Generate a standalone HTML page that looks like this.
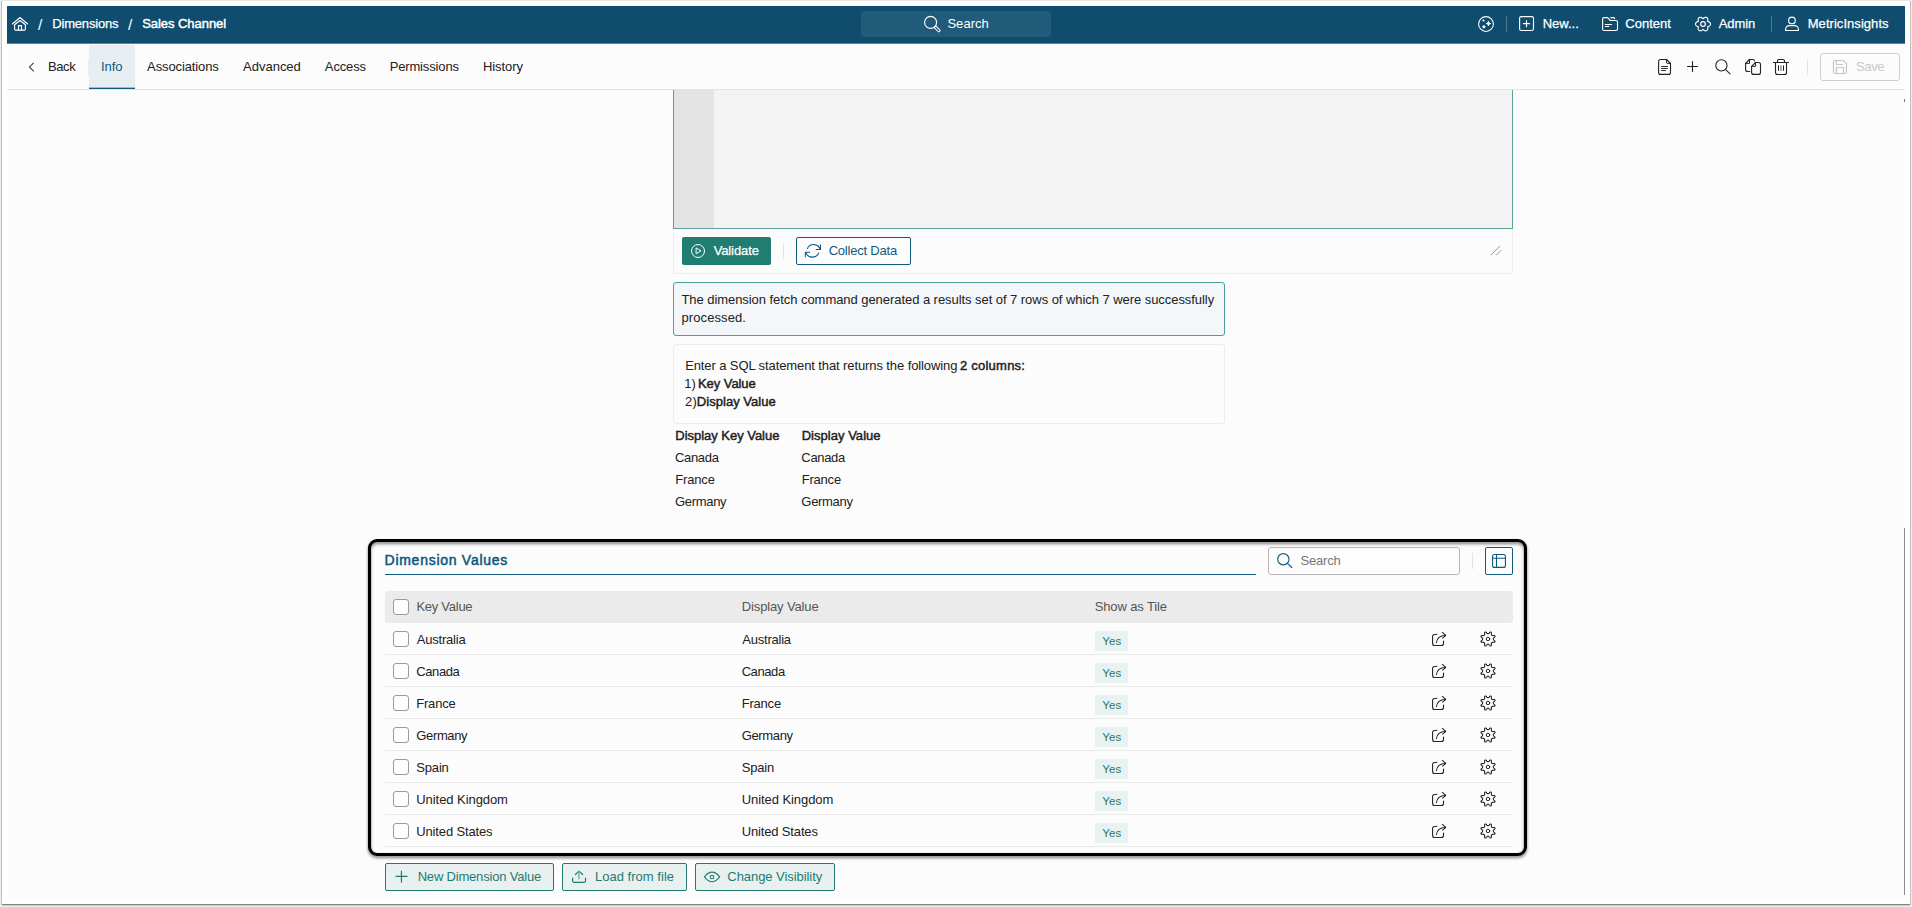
<!DOCTYPE html>
<html lang="en">
<head>
<meta charset="utf-8">
<title>Sales Channel - Dimensions</title>
<style>
html,body{margin:0;padding:0;}
body{width:1912px;height:907px;overflow:hidden;background:#fff;font-family:"Liberation Sans",Arial,sans-serif;}
#app{position:relative;width:1912px;height:907px;overflow:hidden;}
#app *{box-sizing:border-box;}
.a{position:absolute;}
.t{position:absolute;white-space:pre;}
svg{position:absolute;overflow:visible;}
.ico{fill:none;stroke-linecap:round;stroke-linejoin:round;}

</style>
</head>
<body>
<div id="app">
<div class="chrome">
<!-- window frame -->
<div class="a" style="left:0;top:0;width:1912px;height:907px;background:#f1f1f1;"></div>
<div class="a" style="left:1px;top:0;width:1910px;height:905px;background:#fff;border:1px solid #c0c0c0;border-top-color:#e9e9e9;border-bottom-color:#858585;border-radius:2px;box-shadow:0 1px 1px rgba(0,0,0,.18);"></div>
<!-- page -->
<div class="a" style="left:7px;top:6px;width:1898px;height:893px;background:#fcfcfc;"></div>
<!-- top nav -->
<div class="a" style="left:7px;top:6px;width:1898px;height:37px;background:#0f4c6e;"></div>
<div class="a" style="left:7px;top:43px;width:1898px;height:1px;background:#57829a;"></div>
<div class="a" style="left:861px;top:11px;width:190px;height:26px;background:#225a79;border-radius:3px;"></div>
<div class="a" style="left:1506px;top:16px;width:1px;height:16px;background:#4b7891;"></div>
<div class="a" style="left:1771px;top:16px;width:1px;height:16px;background:#4b7891;"></div>
<!-- tab bar -->
<div class="a" style="left:89px;top:45px;width:46px;height:43px;background:#e7eef2;"></div>
<div class="a" style="left:89px;top:87px;width:46px;height:1px;background:#9bbccb;"></div>
<div class="a" style="left:89px;top:88px;width:46px;height:1px;background:#105a80;"></div>
<div class="a" style="left:88px;top:59px;width:1px;height:16px;background:#ececec;"></div>
<div class="a" style="left:7px;top:89px;width:1898px;height:1px;background:#e4e4e4;"></div>
<div class="a" style="left:1807px;top:59px;width:1px;height:16px;background:#e2e2e2;"></div>
<div class="a" style="left:1820px;top:53px;width:80px;height:28px;border:1px solid #cfcfcf;border-radius:3px;background:#fcfcfc;"></div>
<!-- scrollbar -->
<div class="a" style="left:1904px;top:99px;width:1px;height:3px;background:#777;"></div>
<div class="a" style="left:1904px;top:528px;width:1px;height:367px;background:#8a8a8a;"></div>
<!-- editor -->
<div class="a" style="left:673px;top:90px;width:840px;height:139px;background:#f3f3f3;border:1px solid #5aa29a;border-top:none;"></div>
<div class="a" style="left:674px;top:90px;width:40px;height:138px;background:#e3e3e3;"></div>
<div class="a" style="left:673px;top:229px;width:840px;height:45px;border:1px solid #ececec;border-top:none;border-radius:0 0 4px 4px;"></div>
<div class="a" style="left:682px;top:237px;width:89px;height:28px;background:#1f7d72;border-radius:2px;"></div>
<div class="a" style="left:783px;top:243px;width:1px;height:16px;background:#e2e2e2;"></div>
<div class="a" style="left:796px;top:237px;width:115px;height:28px;border:1px solid #105a80;border-radius:2px;background:#fdfdfd;"></div>
<!-- message -->
<div class="a" style="left:673px;top:282px;width:552px;height:54px;background:#f3f7f9;border:1px solid #4ba096;border-radius:3px;"></div>
<div class="a" style="left:673px;top:344px;width:552px;height:80px;border:1px solid #ececec;border-radius:3px;"></div>
<!-- highlight frame -->
<div class="a" style="left:368px;top:539px;width:1159px;height:317px;border:3px solid #000;border-radius:9px;filter:drop-shadow(.5px 2px 1.5px rgba(0,0,0,.5));"></div>
<!-- section header -->
<div class="a" style="left:385px;top:574px;width:871px;height:1px;background:#105a80;"></div>
<div class="a" style="left:1268px;top:547px;width:192px;height:28px;border:1px solid #b5b5b5;border-radius:3px;background:#fdfdfd;"></div>
<div class="a" style="left:1472px;top:553px;width:1px;height:16px;background:#e2e2e2;"></div>
<div class="a" style="left:1485px;top:547px;width:28px;height:28px;border:1px solid #105a80;border-radius:2px;background:#fdfdfd;"></div>
<!-- table -->
<div class="a" style="left:385px;top:591px;width:1128px;height:32px;background:#ebebeb;border-radius:3px;"></div>
<div class="a" style="left:385px;top:654px;width:1128px;height:1px;background:#e9e9e9;"></div>
<div class="a" style="left:1095px;top:631px;width:33px;height:20px;background:#e8f2f1;"></div>
<div class="a" style="left:385px;top:686px;width:1128px;height:1px;background:#e9e9e9;"></div>
<div class="a" style="left:1095px;top:663px;width:33px;height:20px;background:#e8f2f1;"></div>
<div class="a" style="left:385px;top:718px;width:1128px;height:1px;background:#e9e9e9;"></div>
<div class="a" style="left:1095px;top:695px;width:33px;height:20px;background:#e8f2f1;"></div>
<div class="a" style="left:385px;top:750px;width:1128px;height:1px;background:#e9e9e9;"></div>
<div class="a" style="left:1095px;top:727px;width:33px;height:20px;background:#e8f2f1;"></div>
<div class="a" style="left:385px;top:782px;width:1128px;height:1px;background:#e9e9e9;"></div>
<div class="a" style="left:1095px;top:759px;width:33px;height:20px;background:#e8f2f1;"></div>
<div class="a" style="left:385px;top:814px;width:1128px;height:1px;background:#e9e9e9;"></div>
<div class="a" style="left:1095px;top:791px;width:33px;height:20px;background:#e8f2f1;"></div>
<div class="a" style="left:385px;top:846px;width:1128px;height:1px;background:#e9e9e9;"></div>
<div class="a" style="left:1095px;top:823px;width:33px;height:20px;background:#e8f2f1;"></div>
<div class="a" style="left:393px;top:599px;width:16px;height:16px;border:1px solid #9a9a9a;border-radius:3px;background:#fdfdfd;"></div>
<div class="a" style="left:393px;top:631px;width:16px;height:16px;border:1px solid #9a9a9a;border-radius:3px;background:#fdfdfd;"></div>
<div class="a" style="left:393px;top:663px;width:16px;height:16px;border:1px solid #9a9a9a;border-radius:3px;background:#fdfdfd;"></div>
<div class="a" style="left:393px;top:695px;width:16px;height:16px;border:1px solid #9a9a9a;border-radius:3px;background:#fdfdfd;"></div>
<div class="a" style="left:393px;top:727px;width:16px;height:16px;border:1px solid #9a9a9a;border-radius:3px;background:#fdfdfd;"></div>
<div class="a" style="left:393px;top:759px;width:16px;height:16px;border:1px solid #9a9a9a;border-radius:3px;background:#fdfdfd;"></div>
<div class="a" style="left:393px;top:791px;width:16px;height:16px;border:1px solid #9a9a9a;border-radius:3px;background:#fdfdfd;"></div>
<div class="a" style="left:393px;top:823px;width:16px;height:16px;border:1px solid #9a9a9a;border-radius:3px;background:#fdfdfd;"></div>
<div class="a" style="left:385px;top:863px;width:169px;height:28px;background:#e9f1f0;border:1px solid #23796f;border-radius:2px;"></div>
<div class="a" style="left:562px;top:863px;width:125px;height:28px;background:#e9f1f0;border:1px solid #23796f;border-radius:2px;"></div>
<div class="a" style="left:695px;top:863px;width:140px;height:28px;background:#e9f1f0;border:1px solid #23796f;border-radius:2px;"></div>
</div>
<div class="icons">
<svg width="1912" height="907" viewBox="0 0 1912 907" style="left:0;top:0" class="ico">
<g stroke="#fff" stroke-width="1.15">
<path d="M12.4 24 L20 17.5 L27.6 24"/>
<path d="M14.6 24.8 L20 20.5 L25.4 24.8 V28.9 a1.3 1.3 0 0 1 -1.3 1.3 H15.9 a1.3 1.3 0 0 1 -1.3 -1.3 Z"/>
<path d="M18.5 30.2 V25.6 H21.5 V30.2"/>
<g transform="translate(930.6 22.4) rotate(45)"><circle r="6"/><rect x="6" y="-1.15" width="6.6" height="2.3" rx=".5" stroke-width="1"/></g>
<circle cx="1486" cy="24" r="7.4" stroke-width="1.05"/>
<path d="M1488.50 20.70 L1489.62 22.38 L1491.30 23.50 L1489.62 24.62 L1488.50 26.30 L1487.38 24.62 L1485.70 23.50 L1487.38 22.38Z" fill="#fff" stroke="none"/>
<path d="M1483.50 18.90 L1483.98 20.12 L1485.20 20.60 L1483.98 21.08 L1483.50 22.30 L1483.02 21.08 L1481.80 20.60 L1483.02 20.12Z" fill="#fff" stroke="none"/>
<path d="M1483.90 24.70 L1484.74 25.96 L1486.00 26.80 L1484.74 27.64 L1483.90 28.90 L1483.06 27.64 L1481.80 26.80 L1483.06 25.96Z" fill="#fff" stroke="none"/>
<rect x="1519.6" y="16.6" width="13.9" height="13.9" rx="1.8"/>
<path d="M1523.4 23.55 H1529.6 M1526.5 20.45 V26.65"/>
<path d="M1604 17.6 H1607.6 L1610.4 20.5 H1616 a1.5 1.5 0 0 1 1.5 1.5 V29 a1.5 1.5 0 0 1 -1.5 1.5 H1604.1 a1.5 1.5 0 0 1 -1.5 -1.5 V19.1 a1.5 1.5 0 0 1 1.5 -1.5 Z"/>
<path d="M1610.8 17.6 H1613.4 a1.4 1.4 0 0 1 1.3 1"/>
<path d="M1605.4 24.45 H1611.6 M1605.4 26.5 H1608.8"/>
<path d="M1710.50 24.05 L1710.47 24.38 L1710.39 24.70 L1710.25 25.00 L1710.07 25.30 L1709.84 25.57 L1709.57 25.81 L1709.27 26.03 L1708.94 26.21 L1708.60 26.37 L1708.25 26.50 L1707.91 26.61 L1707.59 26.70 L1707.67 27.02 L1707.75 27.38 L1707.81 27.74 L1707.85 28.12 L1707.85 28.49 L1707.81 28.86 L1707.73 29.21 L1707.61 29.55 L1707.45 29.85 L1707.25 30.13 L1707.02 30.36 L1706.75 30.55 L1706.45 30.68 L1706.13 30.77 L1705.80 30.81 L1705.46 30.80 L1705.11 30.73 L1704.76 30.62 L1704.42 30.47 L1704.10 30.28 L1703.79 30.06 L1703.51 29.83 L1703.24 29.58 L1703.00 29.35 L1702.76 29.58 L1702.49 29.83 L1702.21 30.06 L1701.90 30.28 L1701.58 30.47 L1701.24 30.62 L1700.89 30.73 L1700.54 30.80 L1700.20 30.81 L1699.87 30.77 L1699.55 30.68 L1699.25 30.55 L1698.98 30.36 L1698.75 30.13 L1698.55 29.85 L1698.39 29.55 L1698.27 29.21 L1698.19 28.86 L1698.15 28.49 L1698.15 28.12 L1698.19 27.74 L1698.25 27.38 L1698.33 27.02 L1698.41 26.70 L1698.09 26.61 L1697.75 26.50 L1697.40 26.37 L1697.06 26.21 L1696.73 26.03 L1696.43 25.81 L1696.16 25.57 L1695.93 25.30 L1695.75 25.00 L1695.61 24.70 L1695.53 24.38 L1695.50 24.05 L1695.53 23.72 L1695.61 23.40 L1695.75 23.10 L1695.93 22.80 L1696.16 22.53 L1696.43 22.29 L1696.73 22.07 L1697.06 21.89 L1697.40 21.73 L1697.75 21.60 L1698.09 21.49 L1698.41 21.40 L1698.33 21.08 L1698.25 20.72 L1698.19 20.36 L1698.15 19.98 L1698.15 19.61 L1698.19 19.24 L1698.27 18.89 L1698.39 18.55 L1698.55 18.25 L1698.75 17.97 L1698.98 17.74 L1699.25 17.55 L1699.55 17.42 L1699.87 17.33 L1700.20 17.29 L1700.54 17.30 L1700.89 17.37 L1701.24 17.48 L1701.58 17.63 L1701.90 17.82 L1702.21 18.04 L1702.49 18.27 L1702.76 18.52 L1703.00 18.75 L1703.24 18.52 L1703.51 18.27 L1703.79 18.04 L1704.10 17.82 L1704.42 17.63 L1704.76 17.48 L1705.11 17.37 L1705.46 17.30 L1705.80 17.29 L1706.13 17.33 L1706.45 17.42 L1706.75 17.55 L1707.02 17.74 L1707.25 17.97 L1707.45 18.25 L1707.61 18.55 L1707.73 18.89 L1707.81 19.24 L1707.85 19.61 L1707.85 19.98 L1707.81 20.36 L1707.75 20.72 L1707.67 21.08 L1707.59 21.40 L1707.91 21.49 L1708.25 21.60 L1708.60 21.73 L1708.94 21.89 L1709.27 22.07 L1709.57 22.29 L1709.84 22.53 L1710.07 22.80 L1710.25 23.10 L1710.39 23.40 L1710.47 23.72Z"/>
<circle cx="1703" cy="24.05" r="2.4"/>
<circle cx="1791.95" cy="20.4" r="3.35"/>
<path d="M1785.6 30.5 V29.3 A3.7 3.7 0 0 1 1789.3 25.6 H1794.7 A3.7 3.7 0 0 1 1798.4 29.3 V30.5 Z"/>
</g>
<g stroke="#222" stroke-width="1.1">
<path d="M33.7 62.8 L29.5 66.9 L33.7 71.3" stroke="#444" stroke-width="1.15" stroke-linecap="butt" stroke-linejoin="miter"/>
<path d="M1660.6 59.5 H1666.5 L1670.5 63.5 V72.4 a2 2 0 0 1 -2 2 H1660.6 a2 2 0 0 1 -2 -2 V61.5 a2 2 0 0 1 2 -2 Z"/>
<path d="M1666.4 59.6 V62.2 a1.2 1.2 0 0 0 1.2 1.2 H1670.4" stroke-width="1"/>
<path d="M1661.5 66.5 H1667.5 M1661.5 68.5 H1667.5 M1661.5 70.5 H1665.6" stroke-width=".95"/>
<path d="M1687.5 66.5 H1697.5 M1692.5 61.5 V71.5"/>
<circle cx="1721.4" cy="65.4" r="5.6"/><path d="M1725.4 69.4 L1730.1 73.8"/>
<path d="M1749.7 71.5 H1747.6 a2 2 0 0 1 -2 -2 V63.4 L1749.4 59.5 H1752.8 a1.8 1.8 0 0 1 1.8 1.5"/>
<path d="M1749.5 59.6 V63.4 H1745.7" stroke-width="1"/>
<path d="M1755.5 62.5 H1758.5 a2 2 0 0 1 2 2 V72.4 a2 2 0 0 1 -2 2 H1753.6 a2 2 0 0 1 -2 -2 V66.3 Z"/>
<path d="M1755.6 62.6 V66.3 H1751.7" stroke-width="1"/>
<path d="M1773.5 62.5 H1788.5"/>
<path d="M1777.5 62.5 V61 a1.5 1.5 0 0 1 1.5 -1.5 H1783 a1.5 1.5 0 0 1 1.5 1.5 V62.5"/>
<path d="M1775.5 62.5 V72.5 a2 2 0 0 0 2 2 H1784.5 a2 2 0 0 0 2 -2 V62.5"/>
<path d="M1778.5 65.8 V70.4 M1783.5 65.8 V70.4" stroke-width="1"/><path d="M1781 65.8 V70.4" stroke-width="1.2" stroke="#777"/>
</g>
<g stroke="#c6c6c6" stroke-width="1.2">
<path d="M1835.3 60.5 H1843.3 L1846.5 63.6 V71.7 a1.8 1.8 0 0 1 -1.8 1.8 H1835.3 a1.8 1.8 0 0 1 -1.8 -1.8 V62.3 a1.8 1.8 0 0 1 1.8 -1.8 Z"/>
<path d="M1836.5 60.6 V64.5 H1842.7"/>
<path d="M1836.5 73.4 V67.5 H1843.5 V73.4"/>
</g>
<g stroke="#fff" stroke-width="1"><circle cx="698.05" cy="251" r="6.5"/><path d="M696.1 248.3 V253.8 L700.7 251.05 Z"/></g>
<g stroke="#105a80" stroke-width="1.05">
<path d="M807.3 248.6 A6.95 6.95 0 0 1 820.1 249.1"/><path d="M820.5 245.1 V249.5 H816.2"/>
<path d="M818.65 253.05 A6.9 6.9 0 0 1 805.9 252.7"/><path d="M805.3 256.7 V252.3 H809.7"/>
</g>
<g stroke="#8c8c8c" stroke-width=".9"><path d="M1491.1 254.8 L1499.8 246.3 M1496.6 254.8 L1500.9 250.4"/></g>
<g stroke="#105a80" stroke-width="1.1">
<circle cx="1283.35" cy="559.25" r="5.65"/><path d="M1287.4 563.3 L1291.9 567.5"/>
<rect x="1492.55" y="554.5" width="12.9" height="12.9" rx="2"/><path d="M1492.6 558.2 H1505.4 M1496.5 554.6 V567.3"/>
</g>
<g stroke="#222" stroke-width="1.2">
<g transform="translate(0 0)">
<path d="M1436.8 634.5 H1434.6 a2 2 0 0 0 -2 2 V643.5 a2 2 0 0 0 2 2 H1441.5 a2 2 0 0 0 2 -2 V641" stroke-width="1.1"/>
<path d="M1436.4 642.6 C1436.9 638.4 1440 635.6 1445.3 635.45" stroke-width="1.05"/><path d="M1442.4 632.4 L1445.8 635.45 L1442.7 638.1" stroke-width="1.05"/>
<path d="M1493.30 638.95 L1493.30 639.12 L1493.31 639.30 L1493.34 639.48 L1493.41 639.66 L1493.57 639.87 L1493.87 640.12 L1494.27 640.41 L1494.65 640.73 L1494.89 641.04 L1494.99 641.32 L1494.99 641.58 L1494.93 641.82 L1494.81 642.03 L1494.62 642.22 L1494.35 642.34 L1493.96 642.39 L1493.46 642.35 L1492.97 642.27 L1492.59 642.24 L1492.33 642.27 L1492.15 642.35 L1492.00 642.46 L1491.87 642.58 L1491.75 642.70 L1491.63 642.82 L1491.51 642.95 L1491.40 643.10 L1491.32 643.28 L1491.29 643.54 L1491.32 643.92 L1491.40 644.41 L1491.44 644.91 L1491.39 645.30 L1491.27 645.57 L1491.08 645.76 L1490.87 645.88 L1490.63 645.94 L1490.37 645.94 L1490.09 645.84 L1489.78 645.60 L1489.46 645.22 L1489.17 644.82 L1488.92 644.52 L1488.71 644.36 L1488.53 644.29 L1488.35 644.26 L1488.17 644.25 L1488.00 644.25 L1487.83 644.25 L1487.65 644.26 L1487.47 644.29 L1487.29 644.36 L1487.08 644.52 L1486.83 644.82 L1486.54 645.22 L1486.22 645.60 L1485.91 645.84 L1485.63 645.94 L1485.37 645.94 L1485.13 645.88 L1484.92 645.76 L1484.73 645.57 L1484.61 645.30 L1484.56 644.91 L1484.60 644.41 L1484.68 643.92 L1484.71 643.54 L1484.68 643.28 L1484.60 643.10 L1484.49 642.95 L1484.37 642.82 L1484.25 642.70 L1484.13 642.58 L1484.00 642.46 L1483.85 642.35 L1483.67 642.27 L1483.41 642.24 L1483.03 642.27 L1482.54 642.35 L1482.04 642.39 L1481.65 642.34 L1481.38 642.22 L1481.19 642.03 L1481.07 641.82 L1481.01 641.58 L1481.01 641.32 L1481.11 641.04 L1481.35 640.73 L1481.73 640.41 L1482.13 640.12 L1482.43 639.87 L1482.59 639.66 L1482.66 639.48 L1482.69 639.30 L1482.70 639.12 L1482.70 638.95 L1482.70 638.78 L1482.69 638.60 L1482.66 638.42 L1482.59 638.24 L1482.43 638.03 L1482.13 637.78 L1481.73 637.49 L1481.35 637.17 L1481.11 636.86 L1481.01 636.58 L1481.01 636.32 L1481.07 636.08 L1481.19 635.87 L1481.38 635.68 L1481.65 635.56 L1482.04 635.51 L1482.54 635.55 L1483.03 635.63 L1483.41 635.66 L1483.67 635.63 L1483.85 635.55 L1484.00 635.44 L1484.13 635.32 L1484.25 635.20 L1484.37 635.08 L1484.49 634.95 L1484.60 634.80 L1484.68 634.62 L1484.71 634.36 L1484.68 633.98 L1484.60 633.49 L1484.56 632.99 L1484.61 632.60 L1484.73 632.33 L1484.92 632.14 L1485.13 632.02 L1485.37 631.96 L1485.63 631.96 L1485.91 632.06 L1486.22 632.30 L1486.54 632.68 L1486.83 633.08 L1487.08 633.38 L1487.29 633.54 L1487.47 633.61 L1487.65 633.64 L1487.83 633.65 L1488.00 633.65 L1488.17 633.65 L1488.35 633.64 L1488.53 633.61 L1488.71 633.54 L1488.92 633.38 L1489.17 633.08 L1489.46 632.68 L1489.78 632.30 L1490.09 632.06 L1490.37 631.96 L1490.63 631.96 L1490.87 632.02 L1491.08 632.14 L1491.27 632.33 L1491.39 632.60 L1491.44 632.99 L1491.40 633.49 L1491.32 633.98 L1491.29 634.36 L1491.32 634.62 L1491.40 634.80 L1491.51 634.95 L1491.63 635.08 L1491.75 635.20 L1491.87 635.32 L1492.00 635.44 L1492.15 635.55 L1492.33 635.63 L1492.59 635.66 L1492.97 635.63 L1493.46 635.55 L1493.96 635.51 L1494.35 635.56 L1494.62 635.68 L1494.81 635.87 L1494.93 636.08 L1494.99 636.32 L1494.99 636.58 L1494.89 636.86 L1494.65 637.17 L1494.27 637.49 L1493.87 637.78 L1493.57 638.03 L1493.41 638.24 L1493.34 638.42 L1493.31 638.60 L1493.30 638.78Z" stroke-width="1.05"/><circle cx="1488" cy="638.95" r="1.75" stroke-width="1"/>
</g>
<g transform="translate(0 32)">
<path d="M1436.8 634.5 H1434.6 a2 2 0 0 0 -2 2 V643.5 a2 2 0 0 0 2 2 H1441.5 a2 2 0 0 0 2 -2 V641" stroke-width="1.1"/>
<path d="M1436.4 642.6 C1436.9 638.4 1440 635.6 1445.3 635.45" stroke-width="1.05"/><path d="M1442.4 632.4 L1445.8 635.45 L1442.7 638.1" stroke-width="1.05"/>
<path d="M1493.30 638.95 L1493.30 639.12 L1493.31 639.30 L1493.34 639.48 L1493.41 639.66 L1493.57 639.87 L1493.87 640.12 L1494.27 640.41 L1494.65 640.73 L1494.89 641.04 L1494.99 641.32 L1494.99 641.58 L1494.93 641.82 L1494.81 642.03 L1494.62 642.22 L1494.35 642.34 L1493.96 642.39 L1493.46 642.35 L1492.97 642.27 L1492.59 642.24 L1492.33 642.27 L1492.15 642.35 L1492.00 642.46 L1491.87 642.58 L1491.75 642.70 L1491.63 642.82 L1491.51 642.95 L1491.40 643.10 L1491.32 643.28 L1491.29 643.54 L1491.32 643.92 L1491.40 644.41 L1491.44 644.91 L1491.39 645.30 L1491.27 645.57 L1491.08 645.76 L1490.87 645.88 L1490.63 645.94 L1490.37 645.94 L1490.09 645.84 L1489.78 645.60 L1489.46 645.22 L1489.17 644.82 L1488.92 644.52 L1488.71 644.36 L1488.53 644.29 L1488.35 644.26 L1488.17 644.25 L1488.00 644.25 L1487.83 644.25 L1487.65 644.26 L1487.47 644.29 L1487.29 644.36 L1487.08 644.52 L1486.83 644.82 L1486.54 645.22 L1486.22 645.60 L1485.91 645.84 L1485.63 645.94 L1485.37 645.94 L1485.13 645.88 L1484.92 645.76 L1484.73 645.57 L1484.61 645.30 L1484.56 644.91 L1484.60 644.41 L1484.68 643.92 L1484.71 643.54 L1484.68 643.28 L1484.60 643.10 L1484.49 642.95 L1484.37 642.82 L1484.25 642.70 L1484.13 642.58 L1484.00 642.46 L1483.85 642.35 L1483.67 642.27 L1483.41 642.24 L1483.03 642.27 L1482.54 642.35 L1482.04 642.39 L1481.65 642.34 L1481.38 642.22 L1481.19 642.03 L1481.07 641.82 L1481.01 641.58 L1481.01 641.32 L1481.11 641.04 L1481.35 640.73 L1481.73 640.41 L1482.13 640.12 L1482.43 639.87 L1482.59 639.66 L1482.66 639.48 L1482.69 639.30 L1482.70 639.12 L1482.70 638.95 L1482.70 638.78 L1482.69 638.60 L1482.66 638.42 L1482.59 638.24 L1482.43 638.03 L1482.13 637.78 L1481.73 637.49 L1481.35 637.17 L1481.11 636.86 L1481.01 636.58 L1481.01 636.32 L1481.07 636.08 L1481.19 635.87 L1481.38 635.68 L1481.65 635.56 L1482.04 635.51 L1482.54 635.55 L1483.03 635.63 L1483.41 635.66 L1483.67 635.63 L1483.85 635.55 L1484.00 635.44 L1484.13 635.32 L1484.25 635.20 L1484.37 635.08 L1484.49 634.95 L1484.60 634.80 L1484.68 634.62 L1484.71 634.36 L1484.68 633.98 L1484.60 633.49 L1484.56 632.99 L1484.61 632.60 L1484.73 632.33 L1484.92 632.14 L1485.13 632.02 L1485.37 631.96 L1485.63 631.96 L1485.91 632.06 L1486.22 632.30 L1486.54 632.68 L1486.83 633.08 L1487.08 633.38 L1487.29 633.54 L1487.47 633.61 L1487.65 633.64 L1487.83 633.65 L1488.00 633.65 L1488.17 633.65 L1488.35 633.64 L1488.53 633.61 L1488.71 633.54 L1488.92 633.38 L1489.17 633.08 L1489.46 632.68 L1489.78 632.30 L1490.09 632.06 L1490.37 631.96 L1490.63 631.96 L1490.87 632.02 L1491.08 632.14 L1491.27 632.33 L1491.39 632.60 L1491.44 632.99 L1491.40 633.49 L1491.32 633.98 L1491.29 634.36 L1491.32 634.62 L1491.40 634.80 L1491.51 634.95 L1491.63 635.08 L1491.75 635.20 L1491.87 635.32 L1492.00 635.44 L1492.15 635.55 L1492.33 635.63 L1492.59 635.66 L1492.97 635.63 L1493.46 635.55 L1493.96 635.51 L1494.35 635.56 L1494.62 635.68 L1494.81 635.87 L1494.93 636.08 L1494.99 636.32 L1494.99 636.58 L1494.89 636.86 L1494.65 637.17 L1494.27 637.49 L1493.87 637.78 L1493.57 638.03 L1493.41 638.24 L1493.34 638.42 L1493.31 638.60 L1493.30 638.78Z" stroke-width="1.05"/><circle cx="1488" cy="638.95" r="1.75" stroke-width="1"/>
</g>
<g transform="translate(0 64)">
<path d="M1436.8 634.5 H1434.6 a2 2 0 0 0 -2 2 V643.5 a2 2 0 0 0 2 2 H1441.5 a2 2 0 0 0 2 -2 V641" stroke-width="1.1"/>
<path d="M1436.4 642.6 C1436.9 638.4 1440 635.6 1445.3 635.45" stroke-width="1.05"/><path d="M1442.4 632.4 L1445.8 635.45 L1442.7 638.1" stroke-width="1.05"/>
<path d="M1493.30 638.95 L1493.30 639.12 L1493.31 639.30 L1493.34 639.48 L1493.41 639.66 L1493.57 639.87 L1493.87 640.12 L1494.27 640.41 L1494.65 640.73 L1494.89 641.04 L1494.99 641.32 L1494.99 641.58 L1494.93 641.82 L1494.81 642.03 L1494.62 642.22 L1494.35 642.34 L1493.96 642.39 L1493.46 642.35 L1492.97 642.27 L1492.59 642.24 L1492.33 642.27 L1492.15 642.35 L1492.00 642.46 L1491.87 642.58 L1491.75 642.70 L1491.63 642.82 L1491.51 642.95 L1491.40 643.10 L1491.32 643.28 L1491.29 643.54 L1491.32 643.92 L1491.40 644.41 L1491.44 644.91 L1491.39 645.30 L1491.27 645.57 L1491.08 645.76 L1490.87 645.88 L1490.63 645.94 L1490.37 645.94 L1490.09 645.84 L1489.78 645.60 L1489.46 645.22 L1489.17 644.82 L1488.92 644.52 L1488.71 644.36 L1488.53 644.29 L1488.35 644.26 L1488.17 644.25 L1488.00 644.25 L1487.83 644.25 L1487.65 644.26 L1487.47 644.29 L1487.29 644.36 L1487.08 644.52 L1486.83 644.82 L1486.54 645.22 L1486.22 645.60 L1485.91 645.84 L1485.63 645.94 L1485.37 645.94 L1485.13 645.88 L1484.92 645.76 L1484.73 645.57 L1484.61 645.30 L1484.56 644.91 L1484.60 644.41 L1484.68 643.92 L1484.71 643.54 L1484.68 643.28 L1484.60 643.10 L1484.49 642.95 L1484.37 642.82 L1484.25 642.70 L1484.13 642.58 L1484.00 642.46 L1483.85 642.35 L1483.67 642.27 L1483.41 642.24 L1483.03 642.27 L1482.54 642.35 L1482.04 642.39 L1481.65 642.34 L1481.38 642.22 L1481.19 642.03 L1481.07 641.82 L1481.01 641.58 L1481.01 641.32 L1481.11 641.04 L1481.35 640.73 L1481.73 640.41 L1482.13 640.12 L1482.43 639.87 L1482.59 639.66 L1482.66 639.48 L1482.69 639.30 L1482.70 639.12 L1482.70 638.95 L1482.70 638.78 L1482.69 638.60 L1482.66 638.42 L1482.59 638.24 L1482.43 638.03 L1482.13 637.78 L1481.73 637.49 L1481.35 637.17 L1481.11 636.86 L1481.01 636.58 L1481.01 636.32 L1481.07 636.08 L1481.19 635.87 L1481.38 635.68 L1481.65 635.56 L1482.04 635.51 L1482.54 635.55 L1483.03 635.63 L1483.41 635.66 L1483.67 635.63 L1483.85 635.55 L1484.00 635.44 L1484.13 635.32 L1484.25 635.20 L1484.37 635.08 L1484.49 634.95 L1484.60 634.80 L1484.68 634.62 L1484.71 634.36 L1484.68 633.98 L1484.60 633.49 L1484.56 632.99 L1484.61 632.60 L1484.73 632.33 L1484.92 632.14 L1485.13 632.02 L1485.37 631.96 L1485.63 631.96 L1485.91 632.06 L1486.22 632.30 L1486.54 632.68 L1486.83 633.08 L1487.08 633.38 L1487.29 633.54 L1487.47 633.61 L1487.65 633.64 L1487.83 633.65 L1488.00 633.65 L1488.17 633.65 L1488.35 633.64 L1488.53 633.61 L1488.71 633.54 L1488.92 633.38 L1489.17 633.08 L1489.46 632.68 L1489.78 632.30 L1490.09 632.06 L1490.37 631.96 L1490.63 631.96 L1490.87 632.02 L1491.08 632.14 L1491.27 632.33 L1491.39 632.60 L1491.44 632.99 L1491.40 633.49 L1491.32 633.98 L1491.29 634.36 L1491.32 634.62 L1491.40 634.80 L1491.51 634.95 L1491.63 635.08 L1491.75 635.20 L1491.87 635.32 L1492.00 635.44 L1492.15 635.55 L1492.33 635.63 L1492.59 635.66 L1492.97 635.63 L1493.46 635.55 L1493.96 635.51 L1494.35 635.56 L1494.62 635.68 L1494.81 635.87 L1494.93 636.08 L1494.99 636.32 L1494.99 636.58 L1494.89 636.86 L1494.65 637.17 L1494.27 637.49 L1493.87 637.78 L1493.57 638.03 L1493.41 638.24 L1493.34 638.42 L1493.31 638.60 L1493.30 638.78Z" stroke-width="1.05"/><circle cx="1488" cy="638.95" r="1.75" stroke-width="1"/>
</g>
<g transform="translate(0 96)">
<path d="M1436.8 634.5 H1434.6 a2 2 0 0 0 -2 2 V643.5 a2 2 0 0 0 2 2 H1441.5 a2 2 0 0 0 2 -2 V641" stroke-width="1.1"/>
<path d="M1436.4 642.6 C1436.9 638.4 1440 635.6 1445.3 635.45" stroke-width="1.05"/><path d="M1442.4 632.4 L1445.8 635.45 L1442.7 638.1" stroke-width="1.05"/>
<path d="M1493.30 638.95 L1493.30 639.12 L1493.31 639.30 L1493.34 639.48 L1493.41 639.66 L1493.57 639.87 L1493.87 640.12 L1494.27 640.41 L1494.65 640.73 L1494.89 641.04 L1494.99 641.32 L1494.99 641.58 L1494.93 641.82 L1494.81 642.03 L1494.62 642.22 L1494.35 642.34 L1493.96 642.39 L1493.46 642.35 L1492.97 642.27 L1492.59 642.24 L1492.33 642.27 L1492.15 642.35 L1492.00 642.46 L1491.87 642.58 L1491.75 642.70 L1491.63 642.82 L1491.51 642.95 L1491.40 643.10 L1491.32 643.28 L1491.29 643.54 L1491.32 643.92 L1491.40 644.41 L1491.44 644.91 L1491.39 645.30 L1491.27 645.57 L1491.08 645.76 L1490.87 645.88 L1490.63 645.94 L1490.37 645.94 L1490.09 645.84 L1489.78 645.60 L1489.46 645.22 L1489.17 644.82 L1488.92 644.52 L1488.71 644.36 L1488.53 644.29 L1488.35 644.26 L1488.17 644.25 L1488.00 644.25 L1487.83 644.25 L1487.65 644.26 L1487.47 644.29 L1487.29 644.36 L1487.08 644.52 L1486.83 644.82 L1486.54 645.22 L1486.22 645.60 L1485.91 645.84 L1485.63 645.94 L1485.37 645.94 L1485.13 645.88 L1484.92 645.76 L1484.73 645.57 L1484.61 645.30 L1484.56 644.91 L1484.60 644.41 L1484.68 643.92 L1484.71 643.54 L1484.68 643.28 L1484.60 643.10 L1484.49 642.95 L1484.37 642.82 L1484.25 642.70 L1484.13 642.58 L1484.00 642.46 L1483.85 642.35 L1483.67 642.27 L1483.41 642.24 L1483.03 642.27 L1482.54 642.35 L1482.04 642.39 L1481.65 642.34 L1481.38 642.22 L1481.19 642.03 L1481.07 641.82 L1481.01 641.58 L1481.01 641.32 L1481.11 641.04 L1481.35 640.73 L1481.73 640.41 L1482.13 640.12 L1482.43 639.87 L1482.59 639.66 L1482.66 639.48 L1482.69 639.30 L1482.70 639.12 L1482.70 638.95 L1482.70 638.78 L1482.69 638.60 L1482.66 638.42 L1482.59 638.24 L1482.43 638.03 L1482.13 637.78 L1481.73 637.49 L1481.35 637.17 L1481.11 636.86 L1481.01 636.58 L1481.01 636.32 L1481.07 636.08 L1481.19 635.87 L1481.38 635.68 L1481.65 635.56 L1482.04 635.51 L1482.54 635.55 L1483.03 635.63 L1483.41 635.66 L1483.67 635.63 L1483.85 635.55 L1484.00 635.44 L1484.13 635.32 L1484.25 635.20 L1484.37 635.08 L1484.49 634.95 L1484.60 634.80 L1484.68 634.62 L1484.71 634.36 L1484.68 633.98 L1484.60 633.49 L1484.56 632.99 L1484.61 632.60 L1484.73 632.33 L1484.92 632.14 L1485.13 632.02 L1485.37 631.96 L1485.63 631.96 L1485.91 632.06 L1486.22 632.30 L1486.54 632.68 L1486.83 633.08 L1487.08 633.38 L1487.29 633.54 L1487.47 633.61 L1487.65 633.64 L1487.83 633.65 L1488.00 633.65 L1488.17 633.65 L1488.35 633.64 L1488.53 633.61 L1488.71 633.54 L1488.92 633.38 L1489.17 633.08 L1489.46 632.68 L1489.78 632.30 L1490.09 632.06 L1490.37 631.96 L1490.63 631.96 L1490.87 632.02 L1491.08 632.14 L1491.27 632.33 L1491.39 632.60 L1491.44 632.99 L1491.40 633.49 L1491.32 633.98 L1491.29 634.36 L1491.32 634.62 L1491.40 634.80 L1491.51 634.95 L1491.63 635.08 L1491.75 635.20 L1491.87 635.32 L1492.00 635.44 L1492.15 635.55 L1492.33 635.63 L1492.59 635.66 L1492.97 635.63 L1493.46 635.55 L1493.96 635.51 L1494.35 635.56 L1494.62 635.68 L1494.81 635.87 L1494.93 636.08 L1494.99 636.32 L1494.99 636.58 L1494.89 636.86 L1494.65 637.17 L1494.27 637.49 L1493.87 637.78 L1493.57 638.03 L1493.41 638.24 L1493.34 638.42 L1493.31 638.60 L1493.30 638.78Z" stroke-width="1.05"/><circle cx="1488" cy="638.95" r="1.75" stroke-width="1"/>
</g>
<g transform="translate(0 128)">
<path d="M1436.8 634.5 H1434.6 a2 2 0 0 0 -2 2 V643.5 a2 2 0 0 0 2 2 H1441.5 a2 2 0 0 0 2 -2 V641" stroke-width="1.1"/>
<path d="M1436.4 642.6 C1436.9 638.4 1440 635.6 1445.3 635.45" stroke-width="1.05"/><path d="M1442.4 632.4 L1445.8 635.45 L1442.7 638.1" stroke-width="1.05"/>
<path d="M1493.30 638.95 L1493.30 639.12 L1493.31 639.30 L1493.34 639.48 L1493.41 639.66 L1493.57 639.87 L1493.87 640.12 L1494.27 640.41 L1494.65 640.73 L1494.89 641.04 L1494.99 641.32 L1494.99 641.58 L1494.93 641.82 L1494.81 642.03 L1494.62 642.22 L1494.35 642.34 L1493.96 642.39 L1493.46 642.35 L1492.97 642.27 L1492.59 642.24 L1492.33 642.27 L1492.15 642.35 L1492.00 642.46 L1491.87 642.58 L1491.75 642.70 L1491.63 642.82 L1491.51 642.95 L1491.40 643.10 L1491.32 643.28 L1491.29 643.54 L1491.32 643.92 L1491.40 644.41 L1491.44 644.91 L1491.39 645.30 L1491.27 645.57 L1491.08 645.76 L1490.87 645.88 L1490.63 645.94 L1490.37 645.94 L1490.09 645.84 L1489.78 645.60 L1489.46 645.22 L1489.17 644.82 L1488.92 644.52 L1488.71 644.36 L1488.53 644.29 L1488.35 644.26 L1488.17 644.25 L1488.00 644.25 L1487.83 644.25 L1487.65 644.26 L1487.47 644.29 L1487.29 644.36 L1487.08 644.52 L1486.83 644.82 L1486.54 645.22 L1486.22 645.60 L1485.91 645.84 L1485.63 645.94 L1485.37 645.94 L1485.13 645.88 L1484.92 645.76 L1484.73 645.57 L1484.61 645.30 L1484.56 644.91 L1484.60 644.41 L1484.68 643.92 L1484.71 643.54 L1484.68 643.28 L1484.60 643.10 L1484.49 642.95 L1484.37 642.82 L1484.25 642.70 L1484.13 642.58 L1484.00 642.46 L1483.85 642.35 L1483.67 642.27 L1483.41 642.24 L1483.03 642.27 L1482.54 642.35 L1482.04 642.39 L1481.65 642.34 L1481.38 642.22 L1481.19 642.03 L1481.07 641.82 L1481.01 641.58 L1481.01 641.32 L1481.11 641.04 L1481.35 640.73 L1481.73 640.41 L1482.13 640.12 L1482.43 639.87 L1482.59 639.66 L1482.66 639.48 L1482.69 639.30 L1482.70 639.12 L1482.70 638.95 L1482.70 638.78 L1482.69 638.60 L1482.66 638.42 L1482.59 638.24 L1482.43 638.03 L1482.13 637.78 L1481.73 637.49 L1481.35 637.17 L1481.11 636.86 L1481.01 636.58 L1481.01 636.32 L1481.07 636.08 L1481.19 635.87 L1481.38 635.68 L1481.65 635.56 L1482.04 635.51 L1482.54 635.55 L1483.03 635.63 L1483.41 635.66 L1483.67 635.63 L1483.85 635.55 L1484.00 635.44 L1484.13 635.32 L1484.25 635.20 L1484.37 635.08 L1484.49 634.95 L1484.60 634.80 L1484.68 634.62 L1484.71 634.36 L1484.68 633.98 L1484.60 633.49 L1484.56 632.99 L1484.61 632.60 L1484.73 632.33 L1484.92 632.14 L1485.13 632.02 L1485.37 631.96 L1485.63 631.96 L1485.91 632.06 L1486.22 632.30 L1486.54 632.68 L1486.83 633.08 L1487.08 633.38 L1487.29 633.54 L1487.47 633.61 L1487.65 633.64 L1487.83 633.65 L1488.00 633.65 L1488.17 633.65 L1488.35 633.64 L1488.53 633.61 L1488.71 633.54 L1488.92 633.38 L1489.17 633.08 L1489.46 632.68 L1489.78 632.30 L1490.09 632.06 L1490.37 631.96 L1490.63 631.96 L1490.87 632.02 L1491.08 632.14 L1491.27 632.33 L1491.39 632.60 L1491.44 632.99 L1491.40 633.49 L1491.32 633.98 L1491.29 634.36 L1491.32 634.62 L1491.40 634.80 L1491.51 634.95 L1491.63 635.08 L1491.75 635.20 L1491.87 635.32 L1492.00 635.44 L1492.15 635.55 L1492.33 635.63 L1492.59 635.66 L1492.97 635.63 L1493.46 635.55 L1493.96 635.51 L1494.35 635.56 L1494.62 635.68 L1494.81 635.87 L1494.93 636.08 L1494.99 636.32 L1494.99 636.58 L1494.89 636.86 L1494.65 637.17 L1494.27 637.49 L1493.87 637.78 L1493.57 638.03 L1493.41 638.24 L1493.34 638.42 L1493.31 638.60 L1493.30 638.78Z" stroke-width="1.05"/><circle cx="1488" cy="638.95" r="1.75" stroke-width="1"/>
</g>
<g transform="translate(0 160)">
<path d="M1436.8 634.5 H1434.6 a2 2 0 0 0 -2 2 V643.5 a2 2 0 0 0 2 2 H1441.5 a2 2 0 0 0 2 -2 V641" stroke-width="1.1"/>
<path d="M1436.4 642.6 C1436.9 638.4 1440 635.6 1445.3 635.45" stroke-width="1.05"/><path d="M1442.4 632.4 L1445.8 635.45 L1442.7 638.1" stroke-width="1.05"/>
<path d="M1493.30 638.95 L1493.30 639.12 L1493.31 639.30 L1493.34 639.48 L1493.41 639.66 L1493.57 639.87 L1493.87 640.12 L1494.27 640.41 L1494.65 640.73 L1494.89 641.04 L1494.99 641.32 L1494.99 641.58 L1494.93 641.82 L1494.81 642.03 L1494.62 642.22 L1494.35 642.34 L1493.96 642.39 L1493.46 642.35 L1492.97 642.27 L1492.59 642.24 L1492.33 642.27 L1492.15 642.35 L1492.00 642.46 L1491.87 642.58 L1491.75 642.70 L1491.63 642.82 L1491.51 642.95 L1491.40 643.10 L1491.32 643.28 L1491.29 643.54 L1491.32 643.92 L1491.40 644.41 L1491.44 644.91 L1491.39 645.30 L1491.27 645.57 L1491.08 645.76 L1490.87 645.88 L1490.63 645.94 L1490.37 645.94 L1490.09 645.84 L1489.78 645.60 L1489.46 645.22 L1489.17 644.82 L1488.92 644.52 L1488.71 644.36 L1488.53 644.29 L1488.35 644.26 L1488.17 644.25 L1488.00 644.25 L1487.83 644.25 L1487.65 644.26 L1487.47 644.29 L1487.29 644.36 L1487.08 644.52 L1486.83 644.82 L1486.54 645.22 L1486.22 645.60 L1485.91 645.84 L1485.63 645.94 L1485.37 645.94 L1485.13 645.88 L1484.92 645.76 L1484.73 645.57 L1484.61 645.30 L1484.56 644.91 L1484.60 644.41 L1484.68 643.92 L1484.71 643.54 L1484.68 643.28 L1484.60 643.10 L1484.49 642.95 L1484.37 642.82 L1484.25 642.70 L1484.13 642.58 L1484.00 642.46 L1483.85 642.35 L1483.67 642.27 L1483.41 642.24 L1483.03 642.27 L1482.54 642.35 L1482.04 642.39 L1481.65 642.34 L1481.38 642.22 L1481.19 642.03 L1481.07 641.82 L1481.01 641.58 L1481.01 641.32 L1481.11 641.04 L1481.35 640.73 L1481.73 640.41 L1482.13 640.12 L1482.43 639.87 L1482.59 639.66 L1482.66 639.48 L1482.69 639.30 L1482.70 639.12 L1482.70 638.95 L1482.70 638.78 L1482.69 638.60 L1482.66 638.42 L1482.59 638.24 L1482.43 638.03 L1482.13 637.78 L1481.73 637.49 L1481.35 637.17 L1481.11 636.86 L1481.01 636.58 L1481.01 636.32 L1481.07 636.08 L1481.19 635.87 L1481.38 635.68 L1481.65 635.56 L1482.04 635.51 L1482.54 635.55 L1483.03 635.63 L1483.41 635.66 L1483.67 635.63 L1483.85 635.55 L1484.00 635.44 L1484.13 635.32 L1484.25 635.20 L1484.37 635.08 L1484.49 634.95 L1484.60 634.80 L1484.68 634.62 L1484.71 634.36 L1484.68 633.98 L1484.60 633.49 L1484.56 632.99 L1484.61 632.60 L1484.73 632.33 L1484.92 632.14 L1485.13 632.02 L1485.37 631.96 L1485.63 631.96 L1485.91 632.06 L1486.22 632.30 L1486.54 632.68 L1486.83 633.08 L1487.08 633.38 L1487.29 633.54 L1487.47 633.61 L1487.65 633.64 L1487.83 633.65 L1488.00 633.65 L1488.17 633.65 L1488.35 633.64 L1488.53 633.61 L1488.71 633.54 L1488.92 633.38 L1489.17 633.08 L1489.46 632.68 L1489.78 632.30 L1490.09 632.06 L1490.37 631.96 L1490.63 631.96 L1490.87 632.02 L1491.08 632.14 L1491.27 632.33 L1491.39 632.60 L1491.44 632.99 L1491.40 633.49 L1491.32 633.98 L1491.29 634.36 L1491.32 634.62 L1491.40 634.80 L1491.51 634.95 L1491.63 635.08 L1491.75 635.20 L1491.87 635.32 L1492.00 635.44 L1492.15 635.55 L1492.33 635.63 L1492.59 635.66 L1492.97 635.63 L1493.46 635.55 L1493.96 635.51 L1494.35 635.56 L1494.62 635.68 L1494.81 635.87 L1494.93 636.08 L1494.99 636.32 L1494.99 636.58 L1494.89 636.86 L1494.65 637.17 L1494.27 637.49 L1493.87 637.78 L1493.57 638.03 L1493.41 638.24 L1493.34 638.42 L1493.31 638.60 L1493.30 638.78Z" stroke-width="1.05"/><circle cx="1488" cy="638.95" r="1.75" stroke-width="1"/>
</g>
<g transform="translate(0 192)">
<path d="M1436.8 634.5 H1434.6 a2 2 0 0 0 -2 2 V643.5 a2 2 0 0 0 2 2 H1441.5 a2 2 0 0 0 2 -2 V641" stroke-width="1.1"/>
<path d="M1436.4 642.6 C1436.9 638.4 1440 635.6 1445.3 635.45" stroke-width="1.05"/><path d="M1442.4 632.4 L1445.8 635.45 L1442.7 638.1" stroke-width="1.05"/>
<path d="M1493.30 638.95 L1493.30 639.12 L1493.31 639.30 L1493.34 639.48 L1493.41 639.66 L1493.57 639.87 L1493.87 640.12 L1494.27 640.41 L1494.65 640.73 L1494.89 641.04 L1494.99 641.32 L1494.99 641.58 L1494.93 641.82 L1494.81 642.03 L1494.62 642.22 L1494.35 642.34 L1493.96 642.39 L1493.46 642.35 L1492.97 642.27 L1492.59 642.24 L1492.33 642.27 L1492.15 642.35 L1492.00 642.46 L1491.87 642.58 L1491.75 642.70 L1491.63 642.82 L1491.51 642.95 L1491.40 643.10 L1491.32 643.28 L1491.29 643.54 L1491.32 643.92 L1491.40 644.41 L1491.44 644.91 L1491.39 645.30 L1491.27 645.57 L1491.08 645.76 L1490.87 645.88 L1490.63 645.94 L1490.37 645.94 L1490.09 645.84 L1489.78 645.60 L1489.46 645.22 L1489.17 644.82 L1488.92 644.52 L1488.71 644.36 L1488.53 644.29 L1488.35 644.26 L1488.17 644.25 L1488.00 644.25 L1487.83 644.25 L1487.65 644.26 L1487.47 644.29 L1487.29 644.36 L1487.08 644.52 L1486.83 644.82 L1486.54 645.22 L1486.22 645.60 L1485.91 645.84 L1485.63 645.94 L1485.37 645.94 L1485.13 645.88 L1484.92 645.76 L1484.73 645.57 L1484.61 645.30 L1484.56 644.91 L1484.60 644.41 L1484.68 643.92 L1484.71 643.54 L1484.68 643.28 L1484.60 643.10 L1484.49 642.95 L1484.37 642.82 L1484.25 642.70 L1484.13 642.58 L1484.00 642.46 L1483.85 642.35 L1483.67 642.27 L1483.41 642.24 L1483.03 642.27 L1482.54 642.35 L1482.04 642.39 L1481.65 642.34 L1481.38 642.22 L1481.19 642.03 L1481.07 641.82 L1481.01 641.58 L1481.01 641.32 L1481.11 641.04 L1481.35 640.73 L1481.73 640.41 L1482.13 640.12 L1482.43 639.87 L1482.59 639.66 L1482.66 639.48 L1482.69 639.30 L1482.70 639.12 L1482.70 638.95 L1482.70 638.78 L1482.69 638.60 L1482.66 638.42 L1482.59 638.24 L1482.43 638.03 L1482.13 637.78 L1481.73 637.49 L1481.35 637.17 L1481.11 636.86 L1481.01 636.58 L1481.01 636.32 L1481.07 636.08 L1481.19 635.87 L1481.38 635.68 L1481.65 635.56 L1482.04 635.51 L1482.54 635.55 L1483.03 635.63 L1483.41 635.66 L1483.67 635.63 L1483.85 635.55 L1484.00 635.44 L1484.13 635.32 L1484.25 635.20 L1484.37 635.08 L1484.49 634.95 L1484.60 634.80 L1484.68 634.62 L1484.71 634.36 L1484.68 633.98 L1484.60 633.49 L1484.56 632.99 L1484.61 632.60 L1484.73 632.33 L1484.92 632.14 L1485.13 632.02 L1485.37 631.96 L1485.63 631.96 L1485.91 632.06 L1486.22 632.30 L1486.54 632.68 L1486.83 633.08 L1487.08 633.38 L1487.29 633.54 L1487.47 633.61 L1487.65 633.64 L1487.83 633.65 L1488.00 633.65 L1488.17 633.65 L1488.35 633.64 L1488.53 633.61 L1488.71 633.54 L1488.92 633.38 L1489.17 633.08 L1489.46 632.68 L1489.78 632.30 L1490.09 632.06 L1490.37 631.96 L1490.63 631.96 L1490.87 632.02 L1491.08 632.14 L1491.27 632.33 L1491.39 632.60 L1491.44 632.99 L1491.40 633.49 L1491.32 633.98 L1491.29 634.36 L1491.32 634.62 L1491.40 634.80 L1491.51 634.95 L1491.63 635.08 L1491.75 635.20 L1491.87 635.32 L1492.00 635.44 L1492.15 635.55 L1492.33 635.63 L1492.59 635.66 L1492.97 635.63 L1493.46 635.55 L1493.96 635.51 L1494.35 635.56 L1494.62 635.68 L1494.81 635.87 L1494.93 636.08 L1494.99 636.32 L1494.99 636.58 L1494.89 636.86 L1494.65 637.17 L1494.27 637.49 L1493.87 637.78 L1493.57 638.03 L1493.41 638.24 L1493.34 638.42 L1493.31 638.60 L1493.30 638.78Z" stroke-width="1.05"/><circle cx="1488" cy="638.95" r="1.75" stroke-width="1"/>
</g>
</g>
<g stroke="#1f7a70" stroke-width="1.2">
<path d="M396 876.45 H407 M401.45 871 V881.9"/>
<path d="M572.6 878.1 V880.8 a1.5 1.5 0 0 0 1.5 1.5 H584 a1.5 1.5 0 0 0 1.5 -1.5 V878.1"/><path d="M575.4 874.5 L578.9 871.1 L582.7 874.5"/><path d="M578.9 871.4 V878.7" stroke="#6fb0a8" stroke-width="1.4"/>
<path d="M704.4 876.9 Q712 867.3 719.7 876.9 Q712 886.7 704.4 876.9 Z" stroke-width="1.1"/><circle cx="712" cy="876.95" r="1.75" stroke-width="1.1"/>
</g>
</svg>
</div>
<main class="content">
<header class="top-nav">
<span class="t" style="left:38.00px;top:15.7px;font-size:15.5px;line-height:17px;color:#ffffff;letter-spacing:0.087px;">/</span>
<span class="t" style="left:52.33px;top:16.3px;font-size:13px;line-height:15px;color:#ffffff;-webkit-text-stroke:0.25px #ffffff;letter-spacing:-0.198px;">Dimensions</span>
<span class="t" style="left:128.10px;top:15.7px;font-size:15.5px;line-height:17px;color:#ffffff;letter-spacing:0.287px;">/</span>
<span class="t" style="left:142.21px;top:16.3px;font-size:13px;line-height:15px;color:#ffffff;-webkit-text-stroke:0.45px #ffffff;letter-spacing:-0.050px;">Sales Channel</span>
<span class="t" style="left:947.41px;top:16.3px;font-size:13px;line-height:15px;color:#ffffff;letter-spacing:0.046px;">Search</span>
<span class="t" style="left:1542.63px;top:16.3px;font-size:13px;line-height:15px;color:#ffffff;-webkit-text-stroke:0.25px #ffffff;letter-spacing:0.006px;">New...</span>
<span class="t" style="left:1625.34px;top:16.3px;font-size:13px;line-height:15px;color:#ffffff;-webkit-text-stroke:0.25px #ffffff;letter-spacing:0.001px;">Content</span>
<span class="t" style="left:1718.67px;top:16.3px;font-size:13px;line-height:15px;color:#ffffff;-webkit-text-stroke:0.25px #ffffff;letter-spacing:-0.072px;">Admin</span>
<span class="t" style="left:1807.73px;top:16.3px;font-size:13px;line-height:15px;color:#ffffff;-webkit-text-stroke:0.25px #ffffff;letter-spacing:0.049px;">MetricInsights</span>
</header>
<nav class="tab-bar">
<span class="t" style="left:47.93px;top:59.0px;font-size:13px;line-height:15px;color:#212121;letter-spacing:-0.386px;">Back</span>
<span class="t" style="left:100.90px;top:59.0px;font-size:13px;line-height:15px;color:#105a80;letter-spacing:-0.014px;">Info</span>
<span class="t" style="left:147.07px;top:59.0px;font-size:13px;line-height:15px;color:#212121;letter-spacing:-0.108px;">Associations</span>
<span class="t" style="left:243.07px;top:59.0px;font-size:13px;line-height:15px;color:#212121;letter-spacing:-0.009px;">Advanced</span>
<span class="t" style="left:324.87px;top:59.0px;font-size:13px;line-height:15px;color:#212121;letter-spacing:-0.142px;">Access</span>
<span class="t" style="left:389.63px;top:59.0px;font-size:13px;line-height:15px;color:#212121;letter-spacing:-0.146px;">Permissions</span>
<span class="t" style="left:482.93px;top:59.0px;font-size:13px;line-height:15px;color:#212121;letter-spacing:-0.077px;">History</span>
<span class="t" style="left:1855.91px;top:59.0px;font-size:13px;line-height:15px;color:#c8c8c8;letter-spacing:-0.324px;">Save</span>
</nav>
<div class="editor-actions">
<span class="t" style="left:713.64px;top:243.0px;font-size:13px;line-height:15px;color:#ffffff;-webkit-text-stroke:0.25px #ffffff;letter-spacing:-0.112px;">Validate</span>
<span class="t" style="left:828.64px;top:243.0px;font-size:13px;line-height:15px;color:#105a80;letter-spacing:-0.205px;">Collect Data</span>
</div>
<div class="fetch-message">
<span class="t" style="left:681.41px;top:292.0px;font-size:13px;line-height:15px;color:#212121;letter-spacing:-0.054px;">The dimension fetch command generated a results set of 7 rows of which 7 were successfully</span>
<span class="t" style="left:681.56px;top:310.3px;font-size:13px;line-height:15px;color:#212121;letter-spacing:0.081px;">processed.</span>
</div>
<div class="sql-help">
<span class="t" style="left:685.13px;top:358.0px;font-size:13px;line-height:15px;color:#212121;letter-spacing:-0.100px;">Enter a SQL statement that returns the following</span>
<span class="t" style="left:959.95px;top:358.0px;font-size:13px;line-height:15px;color:#212121;-webkit-text-stroke:0.45px #212121;letter-spacing:0.241px;">2 columns:</span>
<span class="t" style="left:684.31px;top:376.0px;font-size:13px;line-height:15px;color:#212121;letter-spacing:-1.309px;">1</span>
<span class="t" style="left:691.42px;top:376.0px;font-size:13px;line-height:15px;color:#212121;letter-spacing:-0.661px;">)</span>
<span class="t" style="left:698.03px;top:376.0px;font-size:13px;line-height:15px;color:#212121;-webkit-text-stroke:0.45px #212121;letter-spacing:-0.069px;">Key Value</span>
<span class="t" style="left:684.95px;top:394.0px;font-size:13px;line-height:15px;color:#212121;letter-spacing:0.297px;">2)</span>
<span class="t" style="left:696.83px;top:394.0px;font-size:13px;line-height:15px;color:#212121;-webkit-text-stroke:0.45px #212121;letter-spacing:0.034px;">Display Value</span>
</div>
<div class="fetch-preview">
<span class="t" style="left:675.33px;top:428.1px;font-size:13px;line-height:15px;color:#212121;-webkit-text-stroke:0.45px #212121;letter-spacing:-0.031px;">Display Key Value</span>
<span class="t" style="left:801.63px;top:428.1px;font-size:13px;line-height:15px;color:#212121;-webkit-text-stroke:0.45px #212121;letter-spacing:0.034px;">Display Value</span>
<span class="t" style="left:675.04px;top:450.1px;font-size:13px;line-height:15px;color:#212121;letter-spacing:-0.337px;">Canada</span>
<span class="t" style="left:801.34px;top:450.1px;font-size:13px;line-height:15px;color:#212121;letter-spacing:-0.337px;">Canada</span>
<span class="t" style="left:675.33px;top:472.1px;font-size:13px;line-height:15px;color:#212121;letter-spacing:-0.185px;">France</span>
<span class="t" style="left:801.63px;top:472.1px;font-size:13px;line-height:15px;color:#212121;letter-spacing:-0.185px;">France</span>
<span class="t" style="left:675.05px;top:494.1px;font-size:13px;line-height:15px;color:#212121;letter-spacing:-0.315px;">Germany</span>
<span class="t" style="left:801.35px;top:494.1px;font-size:13px;line-height:15px;color:#212121;letter-spacing:-0.315px;">Germany</span>
</div>
<section class="dimension-values">
<span class="t" style="left:384.55px;top:551.5px;font-size:14px;line-height:16px;color:#0e5679;-webkit-text-stroke:0.5px #0e5679;letter-spacing:0.730px;">Dimension Values</span>
<span class="t" style="left:1300.41px;top:553.0px;font-size:13px;line-height:15px;color:#777777;letter-spacing:-0.154px;">Search</span>
<span class="t" style="left:416.43px;top:598.8px;font-size:13px;line-height:15px;color:#555555;letter-spacing:-0.269px;">Key Value</span>
<span class="t" style="left:741.83px;top:598.8px;font-size:13px;line-height:15px;color:#555555;letter-spacing:-0.141px;">Display Value</span>
<span class="t" style="left:1094.71px;top:598.8px;font-size:13px;line-height:15px;color:#555555;letter-spacing:-0.130px;">Show as Tile</span>
<span class="t" style="left:416.87px;top:631.7px;font-size:13px;line-height:15px;color:#212121;letter-spacing:-0.219px;">Australia</span>
<span class="t" style="left:742.27px;top:631.7px;font-size:13px;line-height:15px;color:#212121;letter-spacing:-0.219px;">Australia</span>
<span class="t" style="left:1102.15px;top:634.9px;font-size:11.5px;line-height:12px;color:#1f7a72;letter-spacing:0.201px;">Yes</span>
<span class="t" style="left:416.24px;top:663.7px;font-size:13px;line-height:15px;color:#212121;letter-spacing:-0.397px;">Canada</span>
<span class="t" style="left:741.64px;top:663.7px;font-size:13px;line-height:15px;color:#212121;letter-spacing:-0.397px;">Canada</span>
<span class="t" style="left:1102.15px;top:666.9px;font-size:11.5px;line-height:12px;color:#1f7a72;letter-spacing:0.201px;">Yes</span>
<span class="t" style="left:416.23px;top:695.7px;font-size:13px;line-height:15px;color:#212121;letter-spacing:-0.185px;">France</span>
<span class="t" style="left:741.63px;top:695.7px;font-size:13px;line-height:15px;color:#212121;letter-spacing:-0.185px;">France</span>
<span class="t" style="left:1102.15px;top:698.9px;font-size:11.5px;line-height:12px;color:#1f7a72;letter-spacing:0.201px;">Yes</span>
<span class="t" style="left:416.25px;top:727.7px;font-size:13px;line-height:15px;color:#212121;letter-spacing:-0.348px;">Germany</span>
<span class="t" style="left:741.65px;top:727.7px;font-size:13px;line-height:15px;color:#212121;letter-spacing:-0.348px;">Germany</span>
<span class="t" style="left:1102.15px;top:730.9px;font-size:11.5px;line-height:12px;color:#1f7a72;letter-spacing:0.201px;">Yes</span>
<span class="t" style="left:416.31px;top:759.7px;font-size:13px;line-height:15px;color:#212121;letter-spacing:-0.179px;">Spain</span>
<span class="t" style="left:741.71px;top:759.7px;font-size:13px;line-height:15px;color:#212121;letter-spacing:-0.179px;">Spain</span>
<span class="t" style="left:1102.15px;top:762.9px;font-size:11.5px;line-height:12px;color:#1f7a72;letter-spacing:0.201px;">Yes</span>
<span class="t" style="left:416.30px;top:791.7px;font-size:13px;line-height:15px;color:#212121;letter-spacing:-0.065px;">United Kingdom</span>
<span class="t" style="left:741.70px;top:791.7px;font-size:13px;line-height:15px;color:#212121;letter-spacing:-0.065px;">United Kingdom</span>
<span class="t" style="left:1102.15px;top:794.9px;font-size:11.5px;line-height:12px;color:#1f7a72;letter-spacing:0.201px;">Yes</span>
<span class="t" style="left:416.30px;top:823.7px;font-size:13px;line-height:15px;color:#212121;letter-spacing:-0.148px;">United States</span>
<span class="t" style="left:741.70px;top:823.7px;font-size:13px;line-height:15px;color:#212121;letter-spacing:-0.148px;">United States</span>
<span class="t" style="left:1102.15px;top:826.9px;font-size:11.5px;line-height:12px;color:#1f7a72;letter-spacing:0.201px;">Yes</span>
</section>
<div class="table-actions">
<span class="t" style="left:417.63px;top:869.0px;font-size:13px;line-height:15px;color:#1f7a72;letter-spacing:-0.183px;">New Dimension Value</span>
<span class="t" style="left:594.93px;top:869.0px;font-size:13px;line-height:15px;color:#1f7a72;letter-spacing:0.029px;">Load from file</span>
<span class="t" style="left:727.34px;top:869.0px;font-size:13px;line-height:15px;color:#1f7a72;letter-spacing:-0.062px;">Change Visibility</span>
</div>
</main>
</div>
</body>
</html>
